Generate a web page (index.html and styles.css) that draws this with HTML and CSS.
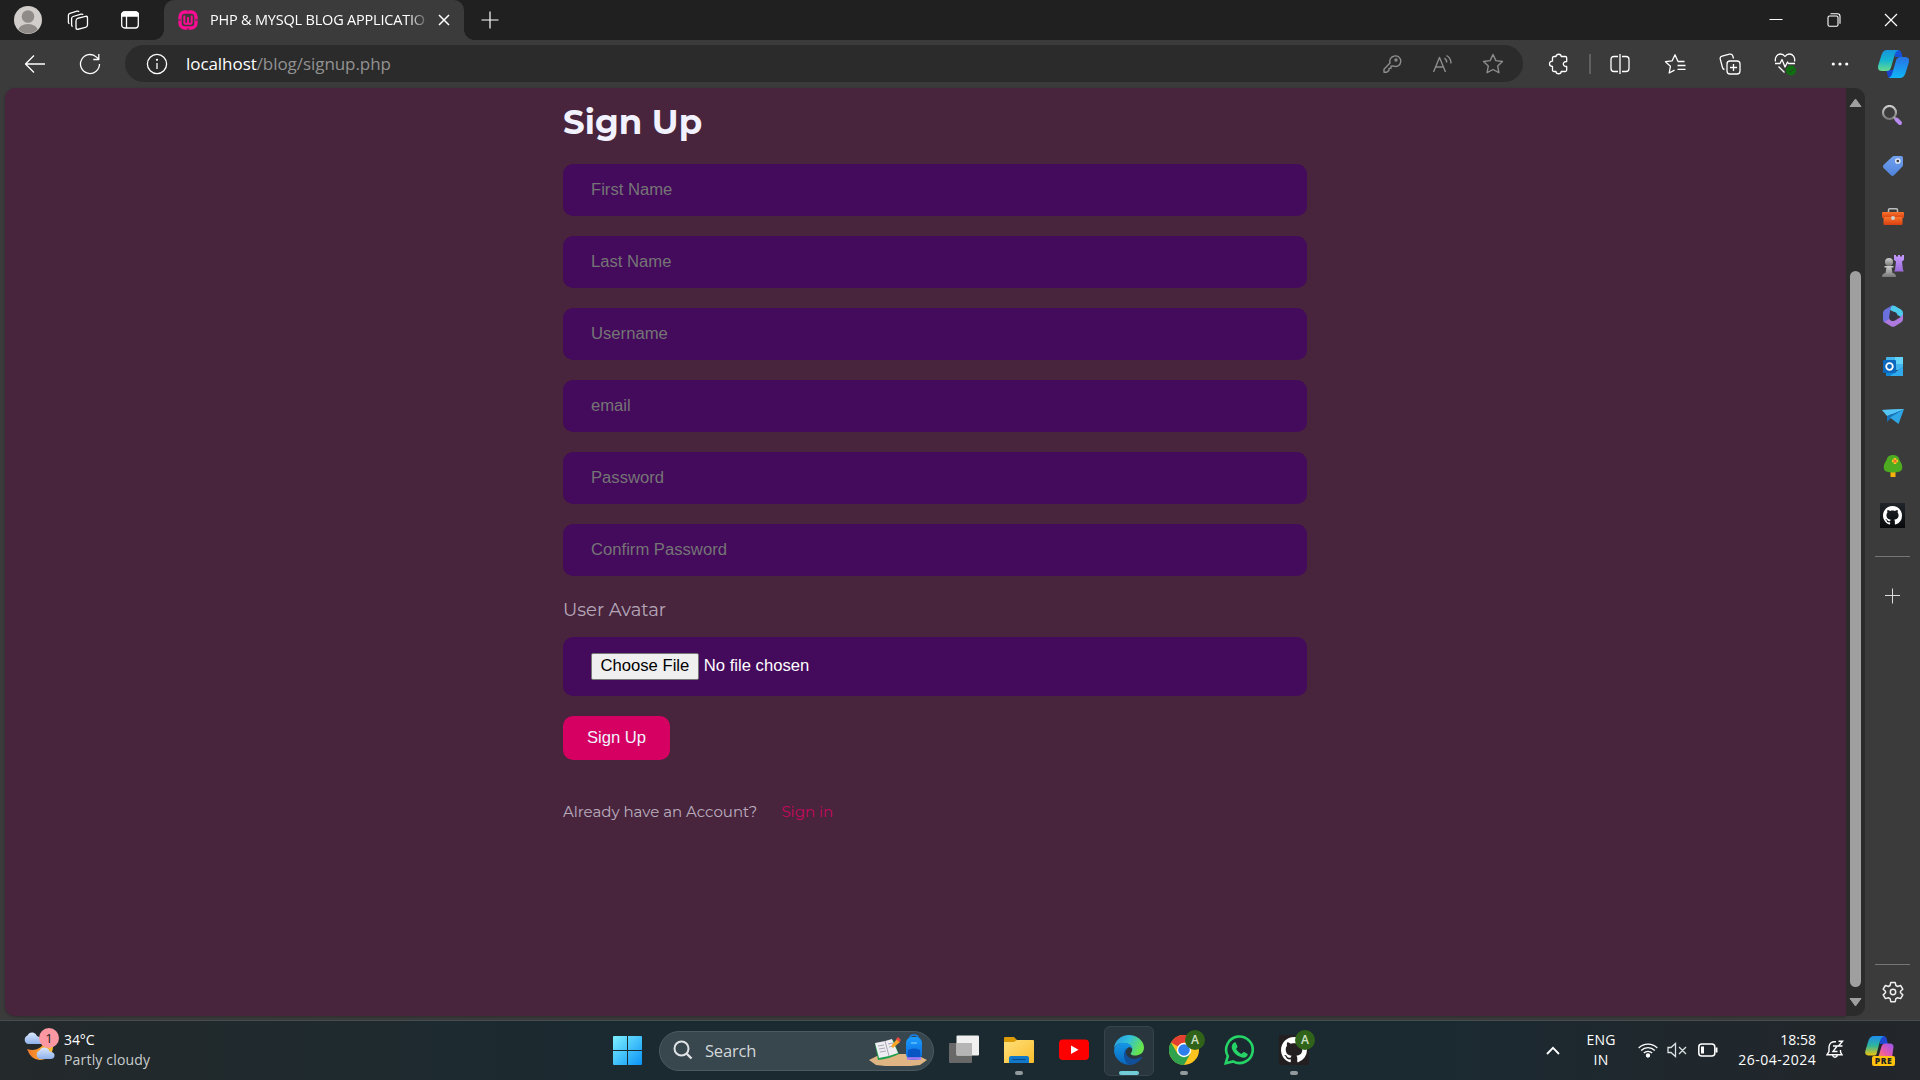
FILE: index.html
```html
<!DOCTYPE html>
<html lang="en">
<head>
<meta charset="utf-8">
<title>PHP &amp; MYSQL BLOG APPLICATION</title>
<link rel="stylesheet" href="styles.css">
</head>
<body>
<svg class="defs" width="0" height="0" aria-hidden="true">
  <defs>
    <linearGradient id="winG" x1="0" y1="0" x2="1" y2="1"><stop offset="0" stop-color="#7df0ff"/><stop offset="1" stop-color="#0a93f5"/></linearGradient>
    <linearGradient id="copA" x1="0" y1="0" x2="0" y2="1"><stop offset="0" stop-color="#1695dc"/><stop offset=".5" stop-color="#16b5d0"/><stop offset="1" stop-color="#68dc8c"/></linearGradient>
    <linearGradient id="copB" x1="0" y1="0" x2="0" y2="1"><stop offset="0" stop-color="#2872e4"/><stop offset="1" stop-color="#10b5f6"/></linearGradient>
    <linearGradient id="preA" x1="0" y1="0" x2="0" y2="1"><stop offset="0" stop-color="#1d8df0"/><stop offset=".5" stop-color="#2fb59a"/><stop offset="1" stop-color="#f0c40c"/></linearGradient>
    <linearGradient id="preB" x1="1" y1="0" x2="0" y2="1"><stop offset="0" stop-color="#9b55f5"/><stop offset=".6" stop-color="#e859a5"/><stop offset="1" stop-color="#ff8a55"/></linearGradient>
    <linearGradient id="edgeA" x1="0" y1="0" x2="1" y2=".4"><stop offset="0" stop-color="#2795df"/><stop offset=".5" stop-color="#32bfdc"/><stop offset="1" stop-color="#67e44d"/></linearGradient>
    <linearGradient id="edgeB" x1="0" y1="0" x2="0" y2="1"><stop offset="0" stop-color="#1697e6"/><stop offset="1" stop-color="#0867bd"/></linearGradient>
    <linearGradient id="folderG" x1="0" y1="0" x2="1" y2="1"><stop offset="0" stop-color="#ffe07a"/><stop offset="1" stop-color="#fabd2d"/></linearGradient>
    <linearGradient id="moonG" x1="0" y1="0" x2="1" y2="0"><stop offset="0" stop-color="#f2762b"/><stop offset="1" stop-color="#ffc02e"/></linearGradient>
    <linearGradient id="cloudG" x1="0" y1="0" x2="0" y2="1"><stop offset="0" stop-color="#dbe8fc"/><stop offset="1" stop-color="#8fb2ea"/></linearGradient>
    <linearGradient id="toolG" x1="0" y1="0" x2="0" y2="1"><stop offset="0" stop-color="#f9742c"/><stop offset="1" stop-color="#d83f10"/></linearGradient>
    <linearGradient id="grayG" x1="0" y1="0" x2="0" y2="1"><stop offset="0" stop-color="#cfcfcf"/><stop offset="1" stop-color="#777"/></linearGradient>
    <linearGradient id="purG" x1="0" y1="0" x2="0" y2="1"><stop offset="0" stop-color="#c69aff"/><stop offset="1" stop-color="#9a6ad8"/></linearGradient>
    <linearGradient id="tagG" x1="0" y1="0" x2="0" y2="1"><stop offset="0" stop-color="#72a0ee"/><stop offset="1" stop-color="#4f84dc"/></linearGradient>
    <linearGradient id="bagG" x1="0" y1="0" x2="0" y2="1"><stop offset="0" stop-color="#1b9cff"/><stop offset="1" stop-color="#0866d8"/></linearGradient>
    <symbol id="octocat" viewBox="0 0 16 16"><path d="M8 0C3.58 0 0 3.58 0 8c0 3.54 2.29 6.53 5.47 7.59.4.07.55-.17.55-.38 0-.19-.01-.82-.01-1.49-2.01.37-2.53-.49-2.69-.94-.09-.23-.48-.94-.82-1.13-.28-.15-.68-.52-.01-.53.63-.01 1.08.58 1.23.82.72 1.21 1.87.87 2.33.66.07-.52.28-.87.51-1.07-1.78-.2-3.64-.89-3.64-3.95 0-.87.31-1.59.82-2.15-.08-.2-.36-1.02.08-2.12 0 0 .67-.21 2.2.82.64-.18 1.32-.27 2-.27s1.36.09 2 .27c1.53-1.04 2.2-.82 2.2-.82.44 1.1.16 1.92.08 2.12.51.56.82 1.27.82 2.15 0 3.07-1.87 3.75-3.65 3.95.29.25.54.73.54 1.48 0 1.07-.01 1.93-.01 2.2 0 .21.15.46.55.38A8.01 8.01 0 0 0 16 8c0-4.42-3.58-8-8-8z"/></symbol>
  </defs>
</svg>

<div class="browser">
  <header class="tabstrip">
    <svg class="ico profile" width="28" height="28" viewBox="0 0 28 28"><circle cx="14" cy="14" r="14" fill="#d0cdca"/><clipPath id="pc"><circle cx="14" cy="14" r="13.6"/></clipPath><g clip-path="url(#pc)" fill="#8f8b88"><circle cx="14" cy="10.5" r="6.3"/><ellipse cx="14" cy="25" rx="10" ry="7"/></g></svg>
    <svg class="ico line workspaces" width="22" height="22" viewBox="0 0 22 22"><rect x="9" y="8" width="11.5" height="11" rx="2" transform="skewY(-14) translate(0 4)"/><path d="M5.6 17.6q-1-.6-1-1.600V9.500q0-1.500 1.500-2l8-2.300q1.500-.4 2 .6M2.400 14.800q-1-.6-1-1.600V6.200q0-1.400 1.500-1.900L10 2.200q1.500-.4 2 .7"/></svg>
    <svg class="ico line tabmenu" width="20" height="20" viewBox="0 0 20 20"><rect x="1.700" y="2" width="16.600" height="16" rx="3"/><path d="M1.700 6V5q0-3 3-3h10.600q3 0 3 3v1z" fill="#fff"/><path d="M6.500 6v12"/></svg>
    <div class="tab">
      <svg class="favicon" width="20" height="20" viewBox="0 0 20 20"><rect x="2" y="2" width="16" height="16" rx="5" fill="none" stroke="#f70d91" stroke-width="3.400"/><path d="M0 10h3M17 10h3M10 0v1.500M10 18v2" stroke="#3b3b3b" stroke-width="1"/><path d="M6.300 5.500v6.500q0 2 1.900 2T10 12V7v5q0 2 1.800 2t1.900-2V5.500" fill="none" stroke="#f70d91" stroke-width="2"/></svg>
      <span class="tab-title">PHP &amp; MYSQL BLOG APPLICATIO</span>
      <svg class="tab-close" width="12" height="12" viewBox="0 0 12 12"><path d="M1 1l10 10M11 1L1 11" stroke="#fff" stroke-width="1.500"/></svg>
    </div>
    <svg class="newtab" width="18" height="18" viewBox="0 0 18 18"><path d="M9 .5v17M.5 9h17" stroke="#fff" stroke-width="1.200"/></svg>
    <div class="winctl">
      <svg width="14" height="14" viewBox="0 0 14 14"><path d="M.5 6.500h13" stroke="#fff"/></svg>
      <svg width="14" height="14" viewBox="0 0 14 14" fill="none" stroke="#fff" stroke-width="1.100"><rect x="1" y="3" width="10" height="10.300" rx="1.500"/><path d="M3.500.8h7q2.500 0 2.500 2.500v7.500"/></svg>
      <svg width="14" height="14" viewBox="0 0 14 14"><path d="M1 1l12 12M13 1L1 13" stroke="#fff" stroke-width="1.200"/></svg>
    </div>
  </header>

  <div class="toolbar">
    <svg class="back line" width="22" height="20" viewBox="0 0 22 20"><path d="M21 10H1.500M10 1.500L1.500 10l8.500 8.500"/></svg>
    <svg class="reload line" width="22" height="22" viewBox="0 0 22 22"><path d="M20.500 11a9.500 9.500 0 1 1-3-6.900L19.800 6.300M19.800 1v5.500h-5.500"/></svg>
    <div class="address">
      <svg class="line" width="22" height="22" viewBox="0 0 22 22"><circle cx="11" cy="11" r="9.600"/><path d="M11 10v6"/><circle cx="11" cy="6.800" r=".5"/></svg>
      <span class="url"><b>localhost</b>/blog/signup.php</span>
      <div class="address-tools">
        <svg class="dim" width="20" height="20" viewBox="0 0 20 20"><path d="M11.800 2.200a5.300 5.300 0 1 1-.8 9.700l-2 .3v2l-2 .2v2L4.700 18.200H2v-3l6-6.200a5.300 5.300 0 0 1 3.800-6.800z"/><circle cx="14" cy="6" r="1"/></svg>
        <svg class="dim" width="20" height="20" viewBox="0 0 20 20"><path d="M1.500 18L7.500 3.500 13.500 18M3.700 13h7.600M12.500 4.200q2.200 1.500 2.200 4.300M14.500 1.500q4.500 2.500 4.500 8"/></svg>
        <svg class="dim" width="22" height="22" viewBox="0 0 22 22"><path d="M11 1.500l2.900 6.100 6.600.9-4.800 4.600 1.200 6.600L11 16.500l-5.900 3.200 1.200-6.600L1.500 8.500l6.600-.9z"/></svg>
      </div>
    </div>
    <div class="actions">
      <svg class="line" width="22" height="22" viewBox="0 0 22 22"><path d="M8 3.500c0-3 5.200-3 5.200 0h4q1.500 0 1.500 1.500v3.500c-4.500-.4-4.500 5.400 0 5V17q0 1.500-1.500 1.500h-4c0 3-5.200 3-5.200 0H6q-1.500 0-1.500-1.500v-3.500c-4-.1-4-5.300 0-5.300V5q0-1.500 1.500-1.500z"/></svg>
      <i class="sep"></i>
      <svg class="line" width="22" height="22" viewBox="0 0 22 22"><path d="M9 3.500H5q-3 0-3 3v9q0 3 3 3h4M13 3.500h4q3 0 3 3v9q0 3-3 3h-4M11 1v20"/></svg>
      <svg class="line" width="22" height="22" viewBox="0 0 22 22"><path d="M20.500 8.500h-6.500L11 1.800 8.200 7.800l-6.700.9 4.900 4.600L5.200 20l5.300-2.900M13.500 12.500h8M13.500 16.300h8"/></svg>
      <svg class="line" width="22" height="22" viewBox="0 0 22 22"><rect x="8" y="8" width="13" height="13" rx="3"/><path d="M14.500 11v7M11 14.500h7M5.500 16.500q-1.600-.3-2-2L1.300 6.300q-.7-2.500 1.800-3.200L10.500 1.200q2.500-.6 3.300 1.800l.7 2.500"/></svg>
      <svg class="line" width="22" height="24" viewBox="0 0 22 24"><path d="M1.500 9.500C.5 5 3.500 2 6.500 2c2.200 0 3.500 1 4.500 2.500C12 3 13.300 2 15.500 2c3 0 6 3 5 7.500M1 11.500h5l2-4 3 7.500 2.500-5 1 1.500H21M4.500 14.500l6 6"/><circle cx="17" cy="18.500" r="5" fill="#0f7010" stroke="none"/><path d="M14.700 18.500l1.700 1.700 3-3.200" stroke="#2b3b2b" stroke-width="1"/></svg>
      <svg class="more" width="18" height="6" viewBox="0 0 18 6" fill="#fff"><circle cx="2.300" cy="3" r="1.600"/><circle cx="9" cy="3" r="1.600"/><circle cx="15.700" cy="3" r="1.600"/></svg>
    </div>
    <svg class="copilot" width="31" height="28" viewBox="0 0 31 28"><path d="M17 0h3.500q2 0 2.800 2.500L24.500 7H17z" fill="#1553d8"/><path d="M10 20h8l-3 8h-2.500q-2 0-2.700-2.200L8.500 21z" fill="#1746cc"/><path d="M9 0h12q-3 .5-4.200 4.500L13 17.500Q12 21 8.500 21H4q-5 0-3.800-5.500L3.500 5Q5 0 9 0z" fill="url(#copA)"/><path d="M22 28H10q3-.5 4.200-4.500L18 10.500Q19 7 22.500 7H27q5 0 3.800 5.500L27.500 23Q26 28 22 28z" fill="url(#copB)"/></svg>
  </div>

  <div class="body">
    <main class="page">
      <form class="signup">
        <h2>Sign Up</h2>
        <input class="field" type="text" placeholder="First Name">
        <input class="field" type="text" placeholder="Last Name">
        <input class="field" type="text" placeholder="Username">
        <input class="field" type="text" placeholder="email">
        <input class="field" type="text" placeholder="Password">
        <input class="field" type="text" placeholder="Confirm Password">
        <label>User Avatar</label>
        <div class="field file"><span class="choose">Choose File</span><span>No file chosen</span></div>
        <button type="button">Sign Up</button>
        <p class="already"><span class="ask">Already have an Account?</span><a>Sign in</a></p>
      </form>
    </main>
    <div class="scroll">
      <svg width="13" height="10" viewBox="0 0 13 10"><path d="M6.500 1L12 8.500H1z" fill="#9f9f9f" stroke="#9f9f9f" stroke-linejoin="round"/></svg>
      <div class="thumb"></div>
      <svg width="13" height="10" viewBox="0 0 13 10"><path d="M6.500 9L12 1.500H1z" fill="#9f9f9f" stroke="#9f9f9f" stroke-linejoin="round"/></svg>
    </div>
    <aside class="sidebar">
      <svg width="22" height="22" viewBox="0 0 22 22"><circle cx="7.500" cy="7.500" r="6.500" fill="none" stroke="url(#grayG)" stroke-width="2.200"/><path d="M11.700 12l2 2" stroke="#aaa" stroke-width="2"/><path d="M14.500 14.500l3.500 3.500" stroke="#b78af0" stroke-width="4" stroke-linecap="round"/></svg>
      <svg width="22" height="22" viewBox="0 0 22 22"><path d="M12 1h7q2 0 2 2v7q0 1-.8 1.800L12 20.200q-1.500 1.500-3 0L1.500 13q-1.300-1.500 0-3L10 2q.8-1 2-1z" fill="url(#tagG)"/><circle cx="15.800" cy="6" r="2.100" fill="#3b3b3b" stroke="#dce5f4" stroke-width="1.500"/></svg>
      <svg width="22" height="22" viewBox="0 0 22 22"><path d="M6.500 8V5q0-1.200 1.200-1.200h6.600q1.200 0 1.200 1.200v3" fill="none" stroke="#bcbcbc" stroke-width="1.500"/><rect x="0" y="7" width="22" height="6" rx="1" fill="url(#toolG)"/><rect x="1.500" y="12" width="19" height="8" rx="1" fill="url(#toolG)"/><circle cx="11" cy="13" r="2" fill="#cfcfcf"/></svg>
      <svg width="22" height="22" viewBox="0 0 22 22"><path d="M12 0h2v1.500h2V0h2v1.500h2V0h2v5l-2 1.500 1 8.500q.8.600.8 1.500h-9.600q0-1 .8-1.500l1-8.500-2-1.500z" fill="url(#purG)"/><circle cx="7" cy="7" r="4" fill="url(#grayG)"/><path d="M2.500 11h9v1.500H9.500L10.500 18q3.500.5 3.500 4H0q0-3.500 3.500-4l1-5.500h-2z" fill="url(#grayG)"/></svg>
      <svg width="22" height="22" viewBox="0 0 22 22"><path d="M9 1q2-1 4 0l6 3.500q2 1.200 2 3.500v5L14.500 9.500V8L8 5z" fill="#4ccbed"/><path d="M9.500.8L3 4.500Q1 5.700 1 8v7q0 1.500 1.200 2.500L8 14V5.500Q8 2.500 11 .3z" fill="#6a70de"/><path d="M2 17l7 4.200q2 1 4 0l6-3.700q2-1.200 2-3.500V9q-1 2.500-3.500 3.700l-5 3q-2 1-4-.5L7 14z" fill="#ae79dd"/><path d="M8 7h4.500l2.700 2v4L12.500 15.200H9L7 13z" fill="#353541"/></svg>
      <svg width="22" height="22" viewBox="0 0 22 22"><rect x="4" y="2" width="17" height="13" rx="1" fill="#42b5ef"/><path d="M13 2h8v7h-8z" fill="#63d3fa"/><path d="M4 12l9 5 8-5v9H4z" fill="#1387d7"/><path d="M21 12v9H8z" fill="#31aaed"/><rect x="1" y="5" width="13" height="13" rx="1" fill="#0b68bc"/><circle cx="7.500" cy="11.500" r="3.300" fill="none" stroke="#fff" stroke-width="1.800"/></svg>
      <svg width="22" height="22" viewBox="0 0 22 22"><path d="M0 5l22-1-10 6z" fill="#53c3f5"/><path d="M22 4L5 11v6l3-3z" fill="#1472b8"/><path d="M22 4L8 12.500 16.500 19z" fill="#2fa7e7"/><path d="M0 5l22-1L5 11z" fill="#55c5f5"/></svg>
      <svg width="22" height="22" viewBox="0 0 22 22"><path d="M8.500 15h5v7h-5z" fill="#f6b20c"/><path d="M11 0q5.500 0 6.500 5Q23 13 18 16.500q-7 2-14 0Q-1 13 4.500 5 5.500 0 11 0z" fill="#4cab20"/><path d="M13 3v6M10 6h6" stroke="#fbc124" stroke-width="2.600"/><circle cx="13" cy="6" r="1.500" fill="#ed672e"/></svg>
      <span class="gh"><svg width="19" height="19" fill="#fff"><use href="#octocat"/></svg></span>
      <hr>
      <svg class="add" width="16" height="16" viewBox="0 0 16 16"><path d="M7.500 .5v15M0 7.500h15" stroke="#ddd"/></svg>
      <hr class="low">
      <svg class="gear" width="22" height="22" viewBox="0 0 22 22" fill="none" stroke="#eee" stroke-width="1.500" stroke-linejoin="round"><path d="M8.800 1.500h4.400l.7 3 1.700 1 3-1 2.200 3.700-2.300 2.100v1.500l2.300 2.100-2.200 3.700-3-.9-1.700 1-.7 3H8.800l-.7-3-1.700-1-3 .9-2.200-3.700 2.300-2.100v-1.500L1.200 8.200l2.200-3.700 3 1 1.700-1z"/><circle cx="11" cy="11" r="2.700"/></svg>
    </aside>
  </div>
</div>

<footer class="taskbar">
  <div class="weather">
    <svg width="34" height="36" viewBox="0 0 34 36"><path d="M3 22q11 4 18-7l7-4q4 16-7 21Q8 36 3 22z" fill="url(#moonG)"/><path d="M4 17a4.500 4.500 0 0 1-.5-8.500Q5 5 9 5.500 12 6 13 9q5 1 4 8z" fill="url(#cloudG)"/><path d="M16 32a4.500 4.500 0 0 1-.5-8.500Q17 20 21 20.500t4.500 4Q31 25 30.500 29q-.5 3-4 3z" fill="url(#cloudG)"/></svg>
    <b class="badge">1</b>
    <div class="wtext"><span>34°C</span><span class="cond">Partly cloudy</span></div>
  </div>
  <div class="dock">
    <svg class="start" width="29" height="29" viewBox="0 0 29 29"><path d="M1 0h13v14H0V1q0-1 1-1zM15 0h13q1 0 1 1v13H15zM0 15h14v14H1q-1 0-1-1zM15 15h14v13q0 1-1 1H15z" fill="url(#winG)"/></svg>
    <div class="search">
      <svg width="20" height="20" viewBox="0 0 20 20" fill="none" stroke="#dfe3e5" stroke-width="2"><circle cx="8.500" cy="8.500" r="7"/><path d="M13.500 13.500l5 5" stroke-width="2.400"/></svg>
      <span>Search</span>
      <svg class="art" width="58" height="32" viewBox="0 0 58 32"><path d="M0 26l12-6h34l12 6-7 5q-22 3-44 0z" fill="#dfb583"/><path d="M6 10l10-2 8-2 6 14q-10 5-21 6z" fill="#1d9e4b"/><path d="M6 9l10-2 4 15-10 2zM16 7l7-2 6 14-9 3z" fill="#eeeef2"/><path d="M16 7l4 15M9 12l6-1M10 15l6-1M11 18l6-1M19 10l5-1M20 13l5-1" stroke="#a7a7b5"/><path d="M22 12l6-7 3 3-7 6z" fill="#fda52a"/><path d="M27 5l2-2 3 3-2 2z" fill="#ef4b42"/><path d="M41 4q0-3 4-3t4 3" fill="none" stroke="#1684ef" stroke-width="1.500"/><rect x="37" y="3" width="16" height="23" rx="6" fill="url(#bagG)"/><path d="M39 16q6-3 12 0v7H39z" fill="#0a55c4"/><path d="M38 24.500h14" stroke="#a879f0" stroke-width="2.500"/><path d="M42 9h6" stroke="#65c0ff" stroke-width="1.500"/></svg>
    </div>
    <div class="app"><svg width="30" height="30" viewBox="0 0 30 30"><rect x="0" y="8" width="23" height="20" rx="1" fill="#686868"/><rect x="7.500" y=".5" width="22.500" height="20" rx="1" fill="#f0f0f0"/><path d="M7.500 8H23v12.500H7.500z" fill="#b5b5b5"/></svg></div>
    <div class="app"><svg width="30" height="30" viewBox="0 0 30 30"><path d="M0 3q0-1 1-1h9l3 3v5H0z" fill="#dd9b07"/><path d="M0 7h10l3-2h16q1 0 1 1v21q0 1-1 1H0z" fill="url(#folderG)"/><path d="M5 28v-5q0-2 2-2h16q2 0 2 2v5z" fill="#1278c9"/><path d="M8.500 24.500h13" stroke="#0b4c8a" stroke-width="1.200"/></svg><i class="dot"></i></div>
    <div class="app"><svg width="30" height="30" viewBox="0 0 30 30"><rect x="0" y="4.500" width="30" height="20.500" rx="4" fill="#f00"/><path d="M12 10.500l7.500 4.200L12 19z" fill="#fff"/></svg></div>
    <div class="app active"><svg width="30" height="30" viewBox="0 0 30 30"><path d="M0 14C0 6 7 0 15 0s15 6 15 12.500c0 6-5 8-9 8-3.500 0-5.500-1.500-3.500-3.200C20 13 16 8 10 8 5 8 1 10 0 14z" fill="url(#edgeA)"/><path d="M0 15C1 10 5 7.800 9.500 7.800c5 0 9 3 9 6.200-4-4.500-8 1-6.300 6.200C14 26 19 27.500 21.500 28.300 11 33 0 25 0 15z" fill="url(#edgeB)"/><path d="M12.500 13c-3 7 4 14.500 14.500 9q1.500-.5.800.8C25 27.500 20 30 15.500 30 9 27 8.500 17 12.500 13z" fill="#124f99"/></svg><i class="dot wide"></i></div>
    <div class="app"><svg width="30" height="30" viewBox="0 0 30 30"><circle cx="15" cy="15" r="15" fill="#fcc31e"/><path d="M15 15L2 7.500a15 15 0 0 1 26 0H15z" fill="#e53f32"/><path d="M2 7.500A15 15 0 0 0 15 30l6.500-11.500L8.500 18.500z" fill="#2ea24c"/><circle cx="15" cy="15" r="7.200" fill="#fff"/><circle cx="15" cy="15" r="5.800" fill="#2f7eed"/></svg><b class="acct">A</b><i class="dot"></i></div>
    <div class="app"><svg width="30" height="30" viewBox="0 0 30 30"><path d="M1.800 28.200l2-7A13.300 13.300 0 1 1 9 26.400z" fill="none" stroke="#25d366" stroke-width="2.600"/><path d="M9.500 8q1-1 2.200-.5l1.800 4q0 1-1.500 2.500 2 3.500 5.500 5 1.800-2.200 2.700-2l3.500 1.900q.3 1.400-1 2.600-2.300 2-6 .6-6.500-2.500-8.700-8.100Q7 10.500 9.500 8z" fill="#25d366"/></svg></div>
    <div class="app"><svg width="30" height="30" viewBox="0 0 30 30"><path fill="#231f20" d="M0 0h30v30H0z"/><use href="#octocat" x="2" y="2" width="26" height="26" fill="#fff"/></svg><b class="acct">A</b><i class="dot"></i></div>
  </div>
  <div class="tray">
    <svg class="chev" width="14" height="9" viewBox="0 0 14 9"><path d="M1 8l6-6.200L13 8" fill="none" stroke="#fff" stroke-width="1.800"/></svg>
    <div class="lang"><span>ENG</span><span>IN</span></div>
    <svg class="wifi" width="20" height="16" viewBox="0 0 20 16" fill="none" stroke="#fff" stroke-width="1.300"><path d="M.7 6a13.200 13.200 0 0 1 18.600 0M3.200 8.500a9.600 9.600 0 0 1 13.600 0M5.800 11a6 6 0 0 1 8.400 0"/><circle cx="10" cy="13.500" r="1.500" fill="#fff"/></svg>
    <svg class="mute" width="20" height="16" viewBox="0 0 20 16" fill="none" stroke="#dce1e3" stroke-width="1.300"><path d="M1 5.500h3L8.500 1.500v13L4 10.500H1zM12 5l7 7M19 5l-7 7"/></svg>
    <svg class="batt" width="20" height="14" viewBox="0 0 20 14"><rect x=".8" y="1" width="16" height="12" rx="3" fill="none" stroke="#fff" stroke-width="1.500"/><path d="M3 3.500h3v7H3z" fill="#fff"/><path d="M18.500 4.500v5" stroke="#fff" stroke-width="2"/></svg>
    <div class="clock"><span>18:58</span><span class="date">26-04-2024</span></div>
    <svg class="bell" width="18" height="19" viewBox="0 0 18 19" fill="none" stroke="#fff" stroke-width="1.400"><path d="M10 1.800Q3.500 1 3 7v4.500L1 14.800h15L14.500 12v-2M6.500 15.500q2 3.500 5 0M12.500 1.200h4L12.500 6h4M7 6h4.200L7 11.500h4.500"/></svg>
    <div class="pre"><svg width="30" height="28" viewBox="0 0 30 28"><path d="M15 0h3.500q2.500 0 3.300 3l1.200 5h-8z" fill="#1d48cf"/><path d="M9 0h10q-3 1-4 5l-3.500 13q-.5 1.500-2 1.500H3Q-.5 19 .3 15L3.500 4.500Q5 0 9 0z" fill="url(#preA)"/><path d="M27 22H13q0-1 1-3l2.300-8q1-3.500 4-3.500H25q3.500 0 3.500 3.500z" fill="url(#preB)"/></svg><b>PRE</b></div>
  </div>
</footer>
</body>
</html>
```
FILE: styles.css
```css
* { box-sizing: border-box; }
body {
  margin: 0;
  width: 1920px;
  height: 1080px;
  overflow: hidden;
  display: flex;
  flex-direction: column;
  background: #3b3b3b;
  font-family: "Open Sans", "Noto Sans", sans-serif;
}
svg { display: block; flex: none; }
.defs { position: absolute; }
.line { fill: none; stroke: #fff; stroke-width: 1.3; stroke-linejoin: round; }
.dim { fill: none; stroke: #8d8d8d; stroke-width: 1.4; stroke-linejoin: round; }

.browser { height: 1020px; display: flex; flex-direction: column; }

/* tab strip */
.tabstrip { height: 40px; background: #202020; display: flex; align-items: center; }
.profile { margin-left: 14px; }
.workspaces { margin-left: 25px; }
.tabmenu { margin-left: 31px; }
.tab {
  position: relative;
  width: 300px;
  height: 40px;
  margin-left: 24px;
  padding-left: 14px;
  display: flex;
  align-items: center;
  background: #3b3b3b;
  border-radius: 10px 10px 0 0;
}
.tab::before, .tab::after {
  content: "";
  position: absolute;
  bottom: 0;
  width: 10px;
  height: 10px;
}
.tab::before { left: -10px; background: radial-gradient(circle at 0 0, #202020 9.5px, #3b3b3b 10px); }
.tab::after { right: -10px; background: radial-gradient(circle at 100% 0, #202020 9.5px, #3b3b3b 10px); }
.tab-title {
  width: 218px;
  margin-left: 12px;
  padding-bottom: 2px;
  white-space: nowrap;
  color: #fff;
  font-size: 14.500px;
  letter-spacing: -.2px;
  -webkit-mask-image: linear-gradient(90deg, #000 198px, transparent 220px);
  mask-image: linear-gradient(90deg, #000 198px, transparent 220px);
}
.tab-close { margin-left: 10px; }
.newtab { margin-left: 17px; }
.winctl { margin-left: auto; margin-right: 22px; display: flex; gap: 43.500px; }

/* toolbar */
.toolbar { height: 48px; padding-bottom: 1px; display: flex; align-items: center; }
.back { margin-left: 24px; }
.reload { margin-left: 33px; }
.address {
  width: 1398px;
  height: 37px;
  margin-left: 24px;
  padding: 0 19px 0 21px;
  display: flex;
  align-items: center;
  background: #2b2b2b;
  border-radius: 19px;
}
.url { margin-left: 18px; padding-bottom: 1px; color: #929292; font-size: 17px; letter-spacing: -.06px; }
.url b { color: #fff; font-weight: 400; }
.address-tools { margin-left: auto; display: flex; align-items: center; gap: 30px; }
.actions { margin-left: 25px; display: flex; align-items: center; gap: 33px; }
.sep { width: 2px; height: 20px; margin: 0 -15px 0 -14px; background: #606060; }
.more { margin-left: 2px; }
.copilot { margin-left: 29px; }

/* page row */
.body { height: 932px; padding-left: 5px; display: flex; }
.page {
  width: 1841px;
  height: 928px;
  background: #48243d;
  border-radius: 10px 0 0 10px;
  box-shadow: 0 1px 3px rgba(0, 0, 0, .25);
}
.signup {
  width: 744px;
  margin-left: 558px;
  padding-top: 12px;
  display: flex;
  flex-direction: column;
  align-items: flex-start;
  font-family: Montserrat, Inter, sans-serif;
}
.signup h2 { height: 44px; margin: 0 0 20px; color: #f2f2fe; font-size: 34px; font-weight: 700; line-height: 44px; }
.field {
  width: 100%;
  height: 52px;
  margin-bottom: 20px;
  padding: 0 28px;
  border: 0;
  border-radius: 10px;
  background: #440a5c;
  color: #fff;
  font: 16.650px "Liberation Sans", Arial, sans-serif;
}
.field::placeholder { color: #757575; opacity: 1; }
.signup label { height: 25px; margin: 2px 0 14px; color: rgba(242, 242, 254, .65); font-size: 18px; line-height: 25px; }
.file { height: 59px; padding-bottom: 2px; display: flex; align-items: center; gap: 5px; }
.choose {
  height: 27px;
  margin-top: 1px;
  padding: 0 8.500px;
  border: 1px solid #777;
  border-radius: 2px;
  background: #efefef;
  color: #000;
  line-height: 23px;
}
.signup button {
  width: 107px;
  height: 44px;
  padding: 0;
  border: 0;
  border-radius: 10px;
  background: #d50062;
  color: #f2f2fe;
  font: 16.650px "Liberation Sans", Arial, sans-serif;
}
.already { margin: 40px 0 0; display: flex; gap: 24px; color: rgba(242, 242, 254, .68); font-size: 15px; line-height: 24px; }
.already a { color: #c7085c; }

.scroll {
  width: 19px;
  height: 928px;
  padding: 10px 0 9px;
  display: flex;
  flex-direction: column;
  align-items: center;
  background: #2b2b2b;
  border-radius: 0 10px 10px 0;
}
.thumb { width: 11px; height: 716px; margin: 163px 0 auto; border-radius: 6px; background: #9f9f9f; }

/* sidebar */
.sidebar { width: 55px; padding-top: 17px; display: flex; flex-direction: column; align-items: center; gap: 28px; }
.gh { width: 25px; height: 25px; margin-top: -2px; display: grid; place-items: center; background: linear-gradient(#20252a, #08090b); }
.sidebar hr { width: 35px; height: 1px; margin: 0; border: 0; background: #767676; }
.sidebar .add { margin-top: 3px; }
.sidebar .low { margin-top: 332px; }
.sidebar .gear { margin-top: -12px; }

/* taskbar */
.taskbar {
  height: 60px;
  display: flex;
  align-items: center;
  border-top: 1px solid #454c4f;
  background: linear-gradient(90deg, #24292b, #1b2a30 30%, #1b2a31 75%, #20272c 90%, #23262a);
  color: #fff;
}
.weather { position: relative; width: 613px; height: 59px; padding: 6px 0 0 24px; display: flex; }
.badge { position: absolute; left: 39px; top: 7px; width: 20px; height: 20px; border-radius: 50%; background: #fd98a2; color: #222; font-size: 13px; font-weight: 400; line-height: 20px; text-align: center; }
.wtext { margin: 3px 0 0 6px; display: flex; flex-direction: column; font-size: 14px; line-height: 20px; letter-spacing: -.1px; }
.cond { color: #c9cdce; letter-spacing: .18px; }
.dock { display: flex; align-items: center; gap: 5px; }
.search {
  width: 275px;
  height: 40px;
  margin: 0 0 0 12px;
  padding: 0 6px 0 13px;
  display: flex;
  align-items: center;
  border: 1px solid #4c5a60;
  border-radius: 20px;
  background: #38464d;
  color: #d3d8da;
  font-size: 16.500px;
}
.search > svg:first-child { margin-top: -2px; }
.search span { margin-left: 12px; letter-spacing: -.2px; }
.art { margin-left: auto; margin-top: -2px; }
.app { position: relative; width: 50px; height: 50px; display: grid; place-items: center; }
.app > svg { margin-top: -1px; }
.active { background: #29363d; border: 1px solid #35434a; border-radius: 6px; }
.dot { position: absolute; bottom: 1px; left: 21px; width: 8px; height: 4px; border-radius: 2px; background: #939a9e; }
.wide { left: 14px; bottom: 0; width: 20px; background: #70cdd8; }
.acct { position: absolute; left: 26px; top: 4px; width: 20px; height: 20px; border-radius: 50%; background: #306319; color: #cfe0c8; font-size: 12px; font-weight: 600; line-height: 20px; text-align: center; }
.tray { margin-left: auto; padding-right: 25px; display: flex; align-items: center; font-size: 14px; line-height: 20px; }
.tray > div:not(.pre) { margin-top: -1px; }
.lang { width: 40px; margin-left: 21px; display: flex; flex-direction: column; align-items: center; letter-spacing: .2px; }
.wifi { margin-left: 17px; margin-top: -2px; }
.mute { margin-left: 9px; margin-top: -2px; }
.batt { margin-left: 11px; margin-top: -2px; }
.clock { width: 90px; margin-left: 8px; display: flex; flex-direction: column; align-items: flex-end; }
.date { letter-spacing: .5px; margin-right: -.4px; }
.bell { margin-left: 10px; margin-top: -2px; }
.pre { position: relative; width: 30px; height: 30px; margin-left: 21px; }
.pre b { position: absolute; left: 7px; bottom: 0; width: 23px; height: 10px; border-radius: 2px; background: #ffc20e; color: #222; font-size: 8.500px; font-weight: 800; line-height: 10px; text-align: center; letter-spacing: .5px; }
```
